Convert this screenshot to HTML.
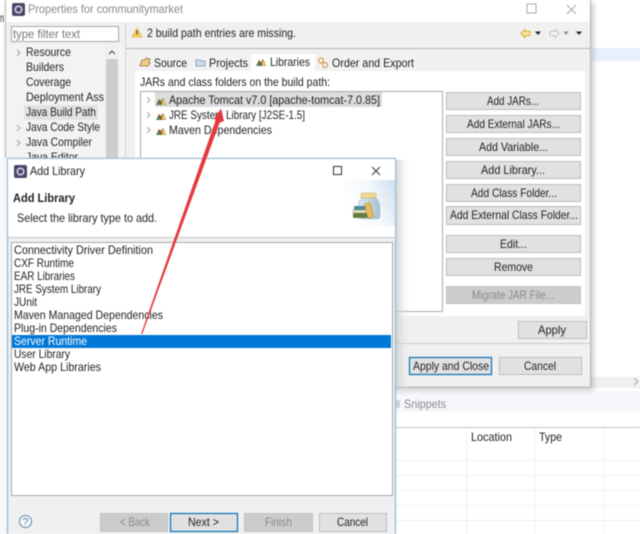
<!DOCTYPE html>
<html><head><meta charset="utf-8"><style>
html,body{margin:0;padding:0;background:#fff;width:640px;height:534px;overflow:hidden}
svg{display:block;filter:blur(.45px)}
text{font-family:"Liberation Sans",sans-serif;font-size:12px;fill:#222}
.g{fill:#8a8a8a}.b{fill:#e1e1e1;stroke:#bcbcbc}.d{fill:#cccccc;stroke:#c4c4c4}
</style></head><body>
<svg width="640" height="534" viewBox="0 0 640 534" xmlns="http://www.w3.org/2000/svg">
<defs>
<linearGradient id="hg" x1="0" y1="0.6" x2="1" y2="0.2"><stop offset="0" stop-color="#fff"/><stop offset=".55" stop-color="#f4f8fb"/><stop offset="1" stop-color="#d3e2f0"/></linearGradient>
<linearGradient id="sh" x1="0" y1="0" x2="1" y2="0"><stop offset="0" stop-color="#c4c4c4"/><stop offset="1" stop-color="#f0f0f0" stop-opacity="0"/></linearGradient>
<linearGradient id="jar" x1="0" y1="0" x2="1" y2="0"><stop offset="0" stop-color="#dfe9f2"/><stop offset="1" stop-color="#a9c0d6"/></linearGradient>
<filter id="ds" x="-5%" y="-5%" width="110%" height="110%"><feGaussianBlur stdDeviation="3"/></filter>
</defs>
<rect width="640" height="534" fill="#fff"/>
<!-- background workbench -->
<rect x="592" y="48" width="48" height="13" fill="#e8f0fb"/>
<text lengthAdjust="spacingAndGlyphs" x="0" y="22" textLength="4">n</text>
<rect x="590" y="377" width="50" height="11" fill="#f0f0f0"/>
<path d="M634 378l4 3.500-4 3.500" fill="none" stroke="#b5b5b5" stroke-width="1.200"/>
<rect x="396" y="391" width="244" height="21" fill="#f5f7fb"/>
<rect x="394" y="400" width="6" height="8" fill="#d0d0d0"/>
<text lengthAdjust="spacingAndGlyphs" x="404" y="408" textLength="42" class="g">Snippets</text>
<rect x="396" y="427" width="244" height="1" fill="#c8c8c8"/>
<text lengthAdjust="spacingAndGlyphs" x="390" y="441" textLength="6">n</text>
<text lengthAdjust="spacingAndGlyphs" x="471" y="441" textLength="41">Location</text>
<text lengthAdjust="spacingAndGlyphs" x="539" y="441" textLength="23">Type</text>
<g fill="#f0f0f0">
<rect x="466" y="428" width="1" height="106"/><rect x="534" y="428" width="1" height="106"/><rect x="603" y="428" width="1" height="106"/>
<rect x="396" y="460" width="244" height="1"/><rect x="396" y="475" width="244" height="1"/><rect x="396" y="490" width="244" height="1"/><rect x="396" y="505" width="244" height="1"/><rect x="396" y="520" width="244" height="1"/>
</g>
<!-- Properties window -->
<rect x="7" y="2" width="586" height="388" fill="#777" opacity=".45" filter="url(#ds)"/>
<rect x="5.500" y="-1" width="585" height="388" fill="#f0f0f0" stroke="#b9b9b9"/>
<rect x="6" y="0" width="584" height="22" fill="#fff"/>
<rect x="0" y="158" width="8" height="376" fill="#f6f8fa"/>
<rect x="12" y="3" width="13" height="13" rx="2" fill="#4a4668"/><circle cx="18.500" cy="9.500" r="4" fill="#d8d8e6"/><circle cx="18.500" cy="9.500" r="2.500" fill="#4a4668"/>
<text lengthAdjust="spacingAndGlyphs" x="28" y="13" textLength="155" class="g">Properties for communitymarket</text>
<rect x="527" y="4" width="9" height="9" fill="none" stroke="#a8a8a8"/>
<path d="M567 5l9 9M576 5l-9 9" stroke="#a8a8a8" fill="none"/>
<!-- left tree -->
<rect x="11.500" y="26.500" width="107" height="15" fill="#fff" stroke="#a8a8a8"/>
<text lengthAdjust="spacingAndGlyphs" x="13" y="38" textLength="67" style="fill:#777">type filter text</text>
<rect x="6" y="44" width="119" height="114" fill="#f3f3f3"/>
<rect x="24" y="105" width="74" height="15" fill="#e2e2e2"/>
<g fill="none" stroke="#a0a0a0"><path d="M17 50l3 3-3 3M17 125l3 3-3 3M17 140l3 3-3 3"/></g>
<text lengthAdjust="spacingAndGlyphs" x="26" y="56" textLength="45">Resource</text>
<text lengthAdjust="spacingAndGlyphs" x="26" y="71" textLength="38">Builders</text>
<text lengthAdjust="spacingAndGlyphs" x="26" y="86" textLength="45">Coverage</text>
<text lengthAdjust="spacingAndGlyphs" x="26" y="101" textLength="78">Deployment Ass</text>
<text lengthAdjust="spacingAndGlyphs" x="26" y="116" textLength="70">Java Build Path</text>
<text lengthAdjust="spacingAndGlyphs" x="26" y="131" textLength="74">Java Code Style</text>
<text lengthAdjust="spacingAndGlyphs" x="26" y="146" textLength="66">Java Compiler</text>
<text lengthAdjust="spacingAndGlyphs" x="26" y="161" textLength="52">Java Editor</text>
<rect x="106" y="45" width="12" height="113" fill="#f0f0f0"/>
<rect x="106" y="59" width="12" height="99" fill="#cdcdcd"/>
<path d="M109 54l3-3 3 3" fill="none" stroke="#444"/>
<rect x="125" y="22" width="1" height="135" fill="#d5d5d5"/>
<!-- right header -->
<rect x="126" y="48" width="465" height="1" fill="#b4b4b4"/>
<path d="M137 28l5 9h-10z" fill="#f4cf5e" stroke="#d8a93c" stroke-width=".6"/><rect x="136.400" y="30.500" width="1.200" height="4" fill="#444"/>
<text lengthAdjust="spacingAndGlyphs" x="147" y="37" textLength="149">2 build path entries are missing.</text>
<path d="M521 33.500l4-4v2h5v4h-5v2z" fill="#fbe7a6" stroke="#e3a92f"/>
<path d="M535 31.500h6l-3 3.500z" fill="#222"/>
<path d="M559 33.500l-4-4v2h-5v4h5v2z" fill="#f4f4f4" stroke="#c4c4c4"/>
<path d="M563 31.500h6l-3 3.500z" fill="#999"/>
<path d="M576 31.500h6l-3 3.500z" fill="#222"/>
<!-- tabs -->
<rect x="135" y="71" width="450" height="245" fill="#fff"/>
<rect x="136" y="55" width="55" height="16" fill="#f2f2f2"/>
<rect x="192" y="55" width="59" height="16" fill="#f2f2f2"/>
<rect x="251" y="54" width="64" height="18" fill="#fff"/>
<rect x="316" y="55" width="100" height="16" fill="#f2f2f2"/>
<path d="M140 66l2-6h3l1-2 4 1-1 3 1 1-2 3z" fill="#edcf8a" stroke="#9a6a2e" stroke-width=".8"/>
<path d="M196 60h4l1 1h4v5h-9z" fill="#cfdcec" stroke="#7893b5" stroke-width=".8"/>
<path d="M256 66l3-6 2 2 2-3 3 7z" fill="#7a6434"/><path d="M256 66l2-3 2 3z" fill="#3f8a86"/><rect x="262" y="61" width="3" height="5" fill="#e0c060"/>
<circle cx="321" cy="60.500" r="2.500" fill="none" stroke="#d0a050" stroke-width="1.200"/><circle cx="325" cy="65" r="2.500" fill="none" stroke="#d0a050" stroke-width="1.200"/>
<text lengthAdjust="spacingAndGlyphs" x="154" y="67" textLength="33">Source</text>
<text lengthAdjust="spacingAndGlyphs" x="209" y="67" textLength="39">Projects</text>
<text lengthAdjust="spacingAndGlyphs" x="270" y="66" textLength="40">Libraries</text>
<text lengthAdjust="spacingAndGlyphs" x="332" y="67" textLength="82">Order and Export</text>
<text lengthAdjust="spacingAndGlyphs" x="140" y="86" textLength="190">JARs and class folders on the build path:</text>
<!-- tree list -->
<rect x="140.500" y="91.500" width="302" height="220" fill="#fff" stroke="#a8a8a8"/>
<rect x="155" y="92" width="227" height="15" fill="#dcdcdc"/>
<g fill="none" stroke="#a8a8a8"><path d="M147 97l3 3-3 3M147 112l3 3-3 3M147 127l3 3-3 3"/></g>
<path d="M156 105l3-6 2 2 2-3 3 7z" fill="#7a6434"/><path d="M156 105l2-3 2 3z" fill="#3f8a86"/><rect x="162" y="100" width="3" height="5" fill="#e0c060"/>
<g transform="translate(0,15)"><path d="M156 105l3-6 2 2 2-3 3 7z" fill="#7a6434"/><path d="M156 105l2-3 2 3z" fill="#3f8a86"/><rect x="162" y="100" width="3" height="5" fill="#e0c060"/></g>
<g transform="translate(0,30)"><path d="M156 105l3-6 2 2 2-3 3 7z" fill="#7a6434"/><path d="M156 105l2-3 2 3z" fill="#3f8a86"/><rect x="162" y="100" width="3" height="5" fill="#e0c060"/></g>
<text lengthAdjust="spacingAndGlyphs" x="169" y="104" textLength="211">Apache Tomcat v7.0 [apache-tomcat-7.0.85]</text>
<text lengthAdjust="spacingAndGlyphs" x="169" y="119" textLength="136">JRE System Library [J2SE-1.5]</text>
<text lengthAdjust="spacingAndGlyphs" x="169" y="134" textLength="103">Maven Dependencies</text>
<!-- side buttons -->
<rect class="b" x="446.500" y="92.500" width="134" height="17"/><text lengthAdjust="spacingAndGlyphs" x="487" y="105" textLength="52">Add JARs...</text>
<rect class="b" x="446.500" y="115.500" width="134" height="17"/><text lengthAdjust="spacingAndGlyphs" x="467" y="128" textLength="93">Add External JARs...</text>
<rect class="b" x="446.500" y="138.500" width="134" height="17"/><text lengthAdjust="spacingAndGlyphs" x="479" y="151" textLength="69">Add Variable...</text>
<rect class="b" x="446.500" y="161.500" width="134" height="17"/><text lengthAdjust="spacingAndGlyphs" x="481" y="174" textLength="64">Add Library...</text>
<rect class="b" x="446.500" y="184.500" width="134" height="17"/><text lengthAdjust="spacingAndGlyphs" x="471" y="197" textLength="86">Add Class Folder...</text>
<rect class="b" x="446.500" y="206.500" width="134" height="18"/><text lengthAdjust="spacingAndGlyphs" x="450" y="219" textLength="128">Add External Class Folder...</text>
<rect class="b" x="446.500" y="235.500" width="134" height="17"/><text lengthAdjust="spacingAndGlyphs" x="500" y="248" textLength="27">Edit...</text>
<rect class="b" x="446.500" y="258.500" width="134" height="17"/><text lengthAdjust="spacingAndGlyphs" x="494" y="271" textLength="39">Remove</text>
<rect class="d" x="446.500" y="286.500" width="134" height="17"/><text lengthAdjust="spacingAndGlyphs" x="472" y="299" textLength="82" class="g">Migrate JAR File...</text>
<rect class="b" x="518.500" y="321.500" width="68" height="17"/><text lengthAdjust="spacingAndGlyphs" x="538" y="334" textLength="28">Apply</text>
<rect x="396" y="343" width="195" height="1" fill="#c8c8c8"/>
<rect x="409.500" y="357.500" width="82" height="17" fill="#e1e1e1" stroke="#0a6cb5" stroke-width="1.200"/><text lengthAdjust="spacingAndGlyphs" x="413" y="370" textLength="76">Apply and Close</text>
<rect class="b" x="499.500" y="357.500" width="82" height="17"/><text lengthAdjust="spacingAndGlyphs" x="524" y="370" textLength="32">Cancel</text>
<!-- Add Library dialog -->
<rect x="396" y="160" width="14" height="230" fill="url(#sh)" opacity=".7"/>
<rect x="7.500" y="158.500" width="388" height="380" fill="#f0f0f0" stroke="#9dbdd4" stroke-width="1.400"/>
<rect x="8" y="159" width="387" height="78" fill="#fff"/>
<rect x="345" y="180" width="50" height="46" fill="url(#hg)"/>
<rect x="14" y="165" width="13" height="13" rx="2" fill="#4a4668"/><circle cx="20.500" cy="171.500" r="4" fill="#d8d8e6"/><circle cx="20.500" cy="171.500" r="2.500" fill="#4a4668"/>
<text lengthAdjust="spacingAndGlyphs" x="30" y="175" textLength="55">Add Library</text>
<rect x="333.500" y="166.500" width="8" height="8" fill="none" stroke="#333"/>
<path d="M372 167l8 8M380 167l-8 8" stroke="#333" fill="none"/>
<text lengthAdjust="spacingAndGlyphs" x="13" y="202" textLength="62" style="font-weight:bold">Add Library</text>
<text lengthAdjust="spacingAndGlyphs" x="17" y="222" textLength="140">Select the library type to add.</text>
<!-- jar icon -->
<path d="M362 198c-3 3-4 6-4 12v6c0 2 2 3 5 3h13c3 0 4-1 4-3v-6c0-6-1-9-4-12z" fill="url(#jar)" stroke="#a3bdd0" stroke-width=".6"/>
<rect x="361" y="193" width="15" height="5" rx="1.500" fill="#eed999" stroke="#c8ac62" stroke-width=".6"/>
<rect x="354" y="206" width="13" height="4" rx="1" fill="#4c8f92"/><rect x="353" y="210" width="15" height="3" fill="#f0e5c0" stroke="#777" stroke-width=".4"/><rect x="353" y="213" width="16" height="5" rx="1" fill="#5f7f3c"/>
<rect x="366" y="203" width="6" height="15" rx="1" fill="#e5bd58" stroke="#a88533" stroke-width=".5" transform="rotate(-14 369 210)"/>
<rect x="8" y="237" width="387" height="1" fill="#c8c8c8"/>
<rect x="11.500" y="242.500" width="381" height="253" fill="#fff" stroke="#a8a8a8"/>
<rect x="12" y="335" width="379" height="13" fill="#0078d7"/>
<text lengthAdjust="spacingAndGlyphs" x="14" y="254" textLength="139">Connectivity Driver Definition</text>
<text lengthAdjust="spacingAndGlyphs" x="14" y="267" textLength="60">CXF Runtime</text>
<text lengthAdjust="spacingAndGlyphs" x="14" y="280" textLength="61">EAR Libraries</text>
<text lengthAdjust="spacingAndGlyphs" x="14" y="293" textLength="87">JRE System Library</text>
<text lengthAdjust="spacingAndGlyphs" x="14" y="306" textLength="23">JUnit</text>
<text lengthAdjust="spacingAndGlyphs" x="14" y="319" textLength="149">Maven Managed Dependencies</text>
<text lengthAdjust="spacingAndGlyphs" x="14" y="332" textLength="103">Plug-in Dependencies</text>
<text lengthAdjust="spacingAndGlyphs" x="14" y="345" textLength="73" style="fill:#fff">Server Runtime</text>
<text lengthAdjust="spacingAndGlyphs" x="14" y="358" textLength="56">User Library</text>
<text lengthAdjust="spacingAndGlyphs" x="14" y="371" textLength="87">Web App Libraries</text>
<circle cx="25.500" cy="521.500" r="6" fill="#f6f9fc" stroke="#5e84a8"/>
<text lengthAdjust="spacingAndGlyphs" x="22.500" y="525" textLength="6" style="fill:#4a6f95;font-size:10px">?</text>
<rect class="d" x="100.500" y="513.500" width="67" height="18"/><text lengthAdjust="spacingAndGlyphs" x="120" y="526" textLength="30" class="g">&lt; Back</text>
<rect x="170.500" y="513.500" width="67" height="18" fill="#e1e1e1" stroke="#0a6cb5" stroke-width="1.200"/><text lengthAdjust="spacingAndGlyphs" x="188" y="526" textLength="31">Next &gt;</text>
<rect class="d" x="244.500" y="513.500" width="68" height="18"/><text lengthAdjust="spacingAndGlyphs" x="265" y="526" textLength="27" class="g">Finish</text>
<rect class="b" x="319.500" y="513.500" width="67" height="18"/><text lengthAdjust="spacingAndGlyphs" x="337" y="526" textLength="31">Cancel</text>
<!-- red arrow -->
<path d="M141 334L215.300 121.300L214.500 118L221 108.500L224 121L219.600 122.700L142.300 334Z" fill="#e4393f"/>
</svg>
</body></html>
